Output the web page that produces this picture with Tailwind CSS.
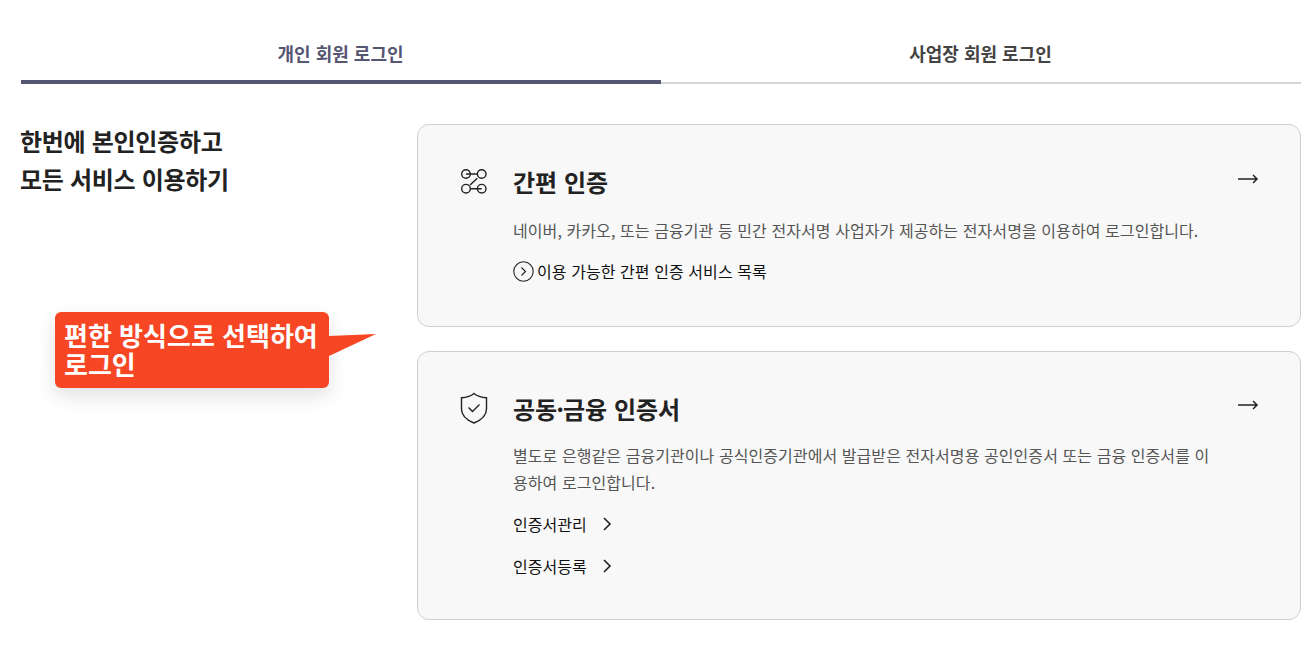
<!DOCTYPE html>
<html lang="ko">
<head>
  <meta charset="UTF-8" />
  <title>로그인</title>
  <script src="https://cdn.jsdelivr.net/npm/@tailwindcss/browser@4"></script>
</head>
<body class="bg-white font-['Noto_Sans_CJK_KR',sans-serif] text-[#111] overflow-hidden">
  <div class="w-[1315px] h-[648px] pl-[21px] pr-[14px] relative">

    <!-- tabs -->
    <div class="flex h-[84px]">
      <div class="w-[640px] h-[84px] flex items-center justify-center pt-[27px] pr-[1px] border-b-4 border-[#555672] text-[18px] font-semibold text-[#555672]">개인 회원 로그인</div>
      <div class="w-[640px] h-[84px] flex items-center justify-center pt-[25px] pr-[1px] border-b-2 border-[#d5d5d5] text-[18px] font-semibold text-[#444]">사업장 회원 로그인</div>
    </div>

    <div class="flex mt-[40px]">
      <!-- left -->
      <div class="w-[396px] shrink-0 text-[24px] font-semibold leading-[38px] tracking-[-0.3px] text-[#222] -mt-[1px] -ml-[1px] mr-[1px]">
        <p class="-mt-[1px]">한번에 본인인증하고</p>
        <p>모든 서비스 이용하기</p>
      </div>

      <!-- cards -->
      <div class="w-[884px] flex flex-col gap-[24px]">
        <div class="h-[203px] rounded-[12px] border border-[#cfcfcf] bg-[#f8f8f8] pl-[42px] pr-[41px] pt-[39px] flex">
          <svg class="w-[28px] h-[28px] mt-[3px] shrink-0" viewBox="0 0 28 28" fill="none" stroke="#222" stroke-width="1.4">
            <circle cx="6" cy="7" r="4.300"/><circle cx="21.700" cy="7" r="4.300"/><circle cx="6" cy="21.700" r="4.300"/><circle cx="21.700" cy="21.700" r="4.300"/>
            <path d="M6 7h11.400M10.300 21.700h11.400M17.300 11.300 10 18"/>
          </svg>
          <div class="ml-[25px] flex-1">
            <h2 class="text-[24px] font-semibold leading-[36px] text-[#222]">간편 인증</h2>
            <p class="mt-[17px] text-[16px] leading-[26px] tracking-[0.08px] text-[#555]">네이버, 카카오, 또는 금융기관 등 민간 전자서명 사업자가 제공하는 전자서명을 이용하여 로그인합니다.</p>
            <div class="mt-[15px] flex items-center gap-[3px] text-[16px] leading-[26px] tracking-[0.07px] text-[#111]">
              <svg class="w-[21px] h-[21px]" viewBox="0 0 21 21" fill="none" stroke="#222" stroke-width="1.1"><circle cx="10.500" cy="10.500" r="9.700"/><path d="M8.500 6.500 12.500 10.500 8.500 14.500"/></svg>
              <span>이용 가능한 간편 인증 서비스 목록</span>
            </div>
          </div>
          <svg class="w-[22px] h-[14px] mt-[8px] shrink-0" viewBox="0 0 22 14" fill="none" stroke="#222" stroke-width="1.5"><path d="M1 7h19M16 3l4 4-4 4"/></svg>
        </div>

        <div class="h-[269px] rounded-[12px] border border-[#cfcfcf] bg-[#f8f8f8] pl-[42px] pr-[41px] pt-[39px] flex">
          <svg class="w-[28px] h-[34px] shrink-0" viewBox="0 0 28 34" fill="none" stroke="#222" stroke-width="1.4">
            <path d="M14 2.500c3 2.600 7.500 4 12.500 4.200V18c0 6.500-5 11-12.500 14C6.500 29 1.500 24.500 1.500 18V6.700C6.500 6.500 11 5.100 14 2.500Z"/>
            <path d="M8.500 16.500 12.500 20.500 19.500 13.500"/>
          </svg>
          <div class="ml-[25px] flex-1">
            <h2 class="text-[24px] font-semibold leading-[36px] text-[#222]">공동<span class="-mx-[1px]">·</span>금융 인증서</h2>
            <p class="mt-[15px] w-[700px] text-[16px] leading-[27px] tracking-[0.07px] text-[#555]">별도로 은행같은 금융기관이나 공식인증기관에서 발급받은 전자서명용 공인인증서 또는 금융 인증서를 이용하여 로그인합니다.</p>
            <div class="mt-[15px] flex items-center gap-[14px] text-[16px] leading-[26px] text-[#111]">
              <span>인증서관리</span>
              <svg class="w-[12px] h-[16px]" viewBox="0 0 12 16" fill="none" stroke="#222" stroke-width="1.6"><path d="M3 2l6 6-6 6"/></svg>
            </div>
            <div class="mt-[16px] flex items-center gap-[14px] text-[16px] leading-[26px] text-[#111]">
              <span>인증서등록</span>
              <svg class="w-[12px] h-[16px]" viewBox="0 0 12 16" fill="none" stroke="#222" stroke-width="1.6"><path d="M3 2l6 6-6 6"/></svg>
            </div>
          </div>
          <svg class="w-[22px] h-[14px] mt-[7px] shrink-0" viewBox="0 0 22 14" fill="none" stroke="#222" stroke-width="1.5"><path d="M1 7h19M16 3l4 4-4 4"/></svg>
        </div>
      </div>
    </div>

    <!-- tooltip -->
    <div class="absolute left-[55px] top-[312px] w-[274px] h-[76px] rounded-[6px] bg-[#f64624] shadow-[0_8px_20px_rgba(0,0,0,0.12)] pl-[9px] pt-[8px] text-[26px] font-semibold leading-[29px] text-white">
      <p>편한 방식으로 선택하여</p>
      <p>로그인</p>
      <svg class="absolute left-[274px] top-[21px] w-[47px] h-[35px]" viewBox="0 0 47 35"><path d="M0 3 47 1 0 23Z" fill="#f64624"/></svg>
    </div>
  </div>
</body>
</html>
